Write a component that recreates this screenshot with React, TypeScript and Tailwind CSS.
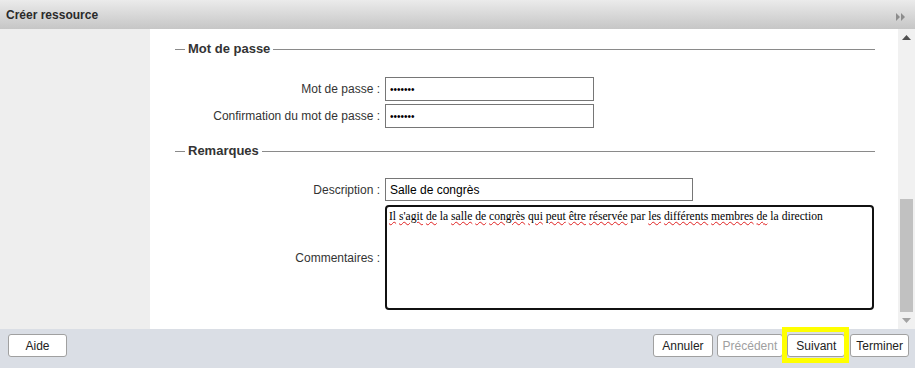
import { ReactNode } from "react";

const sans = "font-['Liberation_Sans',Arial,sans-serif]";

function Legend({ title }: { title: string }) {
	return (
		<div className="flex items-center gap-[3px] pl-[25px] pr-[23px]">
			<div className="w-[10px] h-px bg-[#8a8a8a]" />
			<span className="text-[13px] leading-4 font-bold text-[#333]">{title}</span>
			<div className="flex-1 h-px bg-[#8a8a8a]" />
		</div>
	);
}

function Label({ children }: { children: ReactNode }) {
	return <label className="text-right text-[12px] text-[#333] pr-[1px]">{children}</label>;
}

// mots soulignés par le correcteur
const comment: [string, boolean][] = [
	["Il", true], ["s'agit", true], ["de", true], ["la", false], ["salle", true],
	["de", true], ["congrès", true], ["qui", true], ["peut", true], ["être", true],
	["réservée", true], ["par", false], ["les", true], ["différents", true],
	["membres", true], ["de", true], ["la", false], ["direction", false],
];

function Button({ children, disabled, wide }: { children: ReactNode; disabled?: boolean; wide?: boolean }) {
	return (
		<button
			className={
				"h-[23px] rounded-[3px] border border-[#a0a0a0] bg-white text-[12px] " +
				(wide ? "px-[8px] " : "px-[5px] ") +
				(disabled ? "text-[#a0a0a0]" : "text-[#222]")
			}
		>
			{children}
		</button>
	);
}

export default function App() {
	return (
		<div className={`w-[915px] h-[368px] flex flex-col overflow-hidden ${sans}`}>
			{/* barre de titre */}
			<div className="h-[29px] shrink-0 flex items-center justify-between pl-[6px] pr-[9px] bg-gradient-to-b from-[#ebebeb] to-[#c6c6c6]">
				<span className="text-[12px] font-bold text-[#2a2a2a]">Créer ressource</span>
				<svg width="10" height="8" viewBox="0 0 10 8" className="mt-[4px]">
					<path d="M0 0 L4 4 L0 8 Z M5 0 L9 4 L5 8 Z" fill="#8c8c8c" />
				</svg>
			</div>

			<div className="flex flex-1 min-h-0">
				<div className="w-[150px] bg-[#eeeeee]" />
				<div className="flex-1 bg-white pt-[12px]">
					<Legend title="Mot de passe" />
					<div className="grid grid-cols-[231px_auto] gap-x-[4px] gap-y-[3px] items-center mt-[20px]">
						<Label>Mot de passe :</Label>
						<input
							type="password"
							readOnly
							value="1234567"
							className="w-[209px] h-[24px] px-[4px] border border-[#767676] text-[10px] outline-none"
						/>
						<Label>Confirmation du mot de passe :</Label>
						<input
							type="password"
							readOnly
							value="1234567"
							className="w-[209px] h-[24px] px-[4px] border border-[#767676] text-[10px] outline-none"
						/>
					</div>

					<div className="mt-[15px]">
						<Legend title="Remarques" />
					</div>
					<div className="grid grid-cols-[231px_auto] gap-x-[4px] gap-y-[4px] items-center mt-[19px]">
						<Label>Description :</Label>
						<input
							readOnly
							value="Salle de congrès"
							className="w-[308px] h-[23px] px-[4px] border border-[#767676] text-[12px] text-black outline-none"
						/>
						<Label>Commentaires :</Label>
						<div className="w-[489px] h-[105px] border-2 border-[#111] rounded-[4px] px-[2px] pt-[1px] font-['Liberation_Serif','Times_New_Roman',serif] text-[11.6px] text-black">
							{comment.map(([w, bad], i) => (
								<span key={i}>
									<span className={bad ? "underline decoration-wavy decoration-[#e02020] decoration-1" : ""}>{w}</span>
									{i < comment.length - 1 ? " " : ""}
								</span>
							))}
						</div>
					</div>
				</div>

				{/* barre de défilement */}
				<div className="w-[17px] bg-[#f1f1f1] flex flex-col items-center">
					<div className="h-[17px] flex items-center justify-center">
						<svg width="9" height="5" viewBox="0 0 9 5">
							<path d="M0 5 L4.5 0 L9 5 Z" fill="#505050" />
						</svg>
					</div>
					<div className="flex-1 w-full flex flex-col justify-end px-[2px]">
						<div className="h-[113px] bg-[#c1c1c1]" />
					</div>
					<div className="h-[17px] flex items-center justify-center">
						<svg width="9" height="5" viewBox="0 0 9 5">
							<path d="M0 0 L9 0 L4.5 5 Z" fill="#a3a3a3" />
						</svg>
					</div>
				</div>
			</div>

			{/* pied */}
			<div className="h-[39px] shrink-0 bg-[#dadee5] flex items-start pt-[5px] pl-[8px] pr-[6px]">
				<button className="w-[59px] h-[23px] rounded-[3px] border border-[#a0a0a0] bg-white text-[12px] text-[#222]">
					Aide
				</button>
				<div className="ml-auto flex gap-[4px]">
					<Button wide>Annuler</Button>
					<Button disabled>Précédent</Button>
					<div className="relative flex mr-[1px]">
						<Button wide>Suivant</Button>
						<span className="absolute -left-[5px] -right-[4px] -top-[7px] -bottom-[6px] border-[5px] border-[#ffff00] pointer-events-none" />
					</div>
					<Button>Terminer</Button>
				</div>
			</div>
		</div>
	);
}
